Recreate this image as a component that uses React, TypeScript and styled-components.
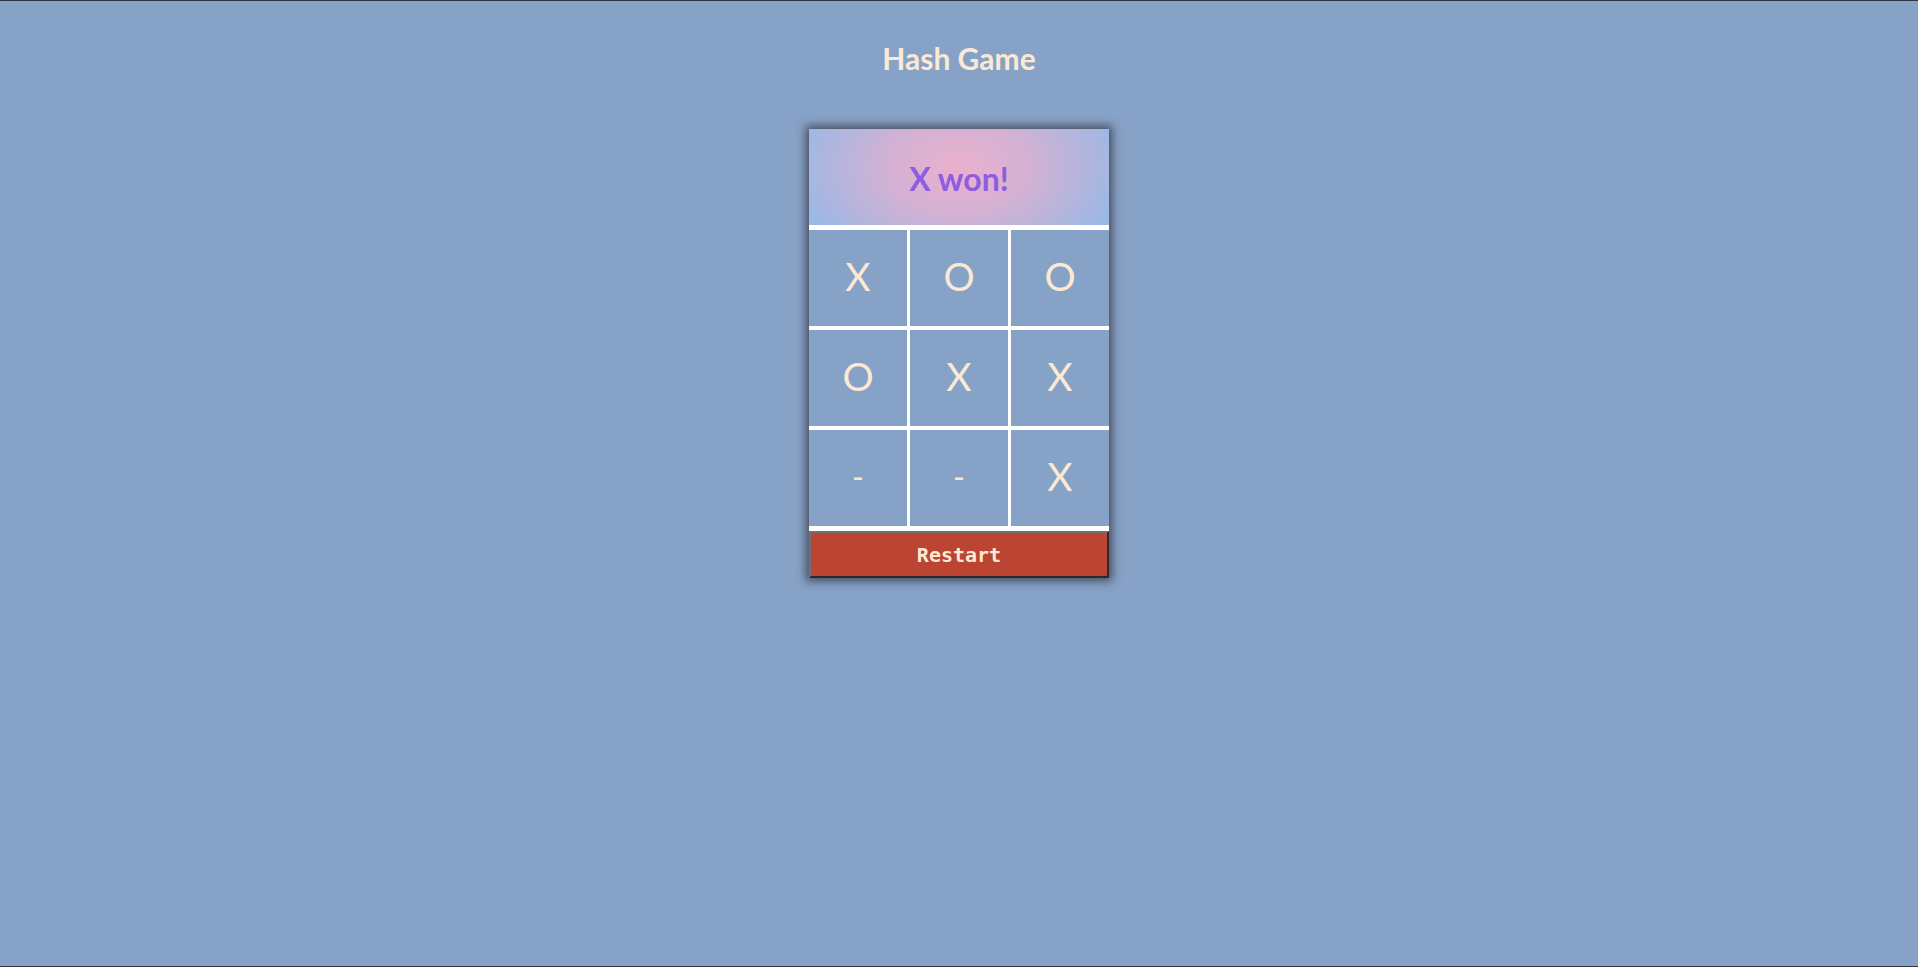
import React from "react";
import styled, { createGlobalStyle } from "styled-components";

const GlobalStyle = createGlobalStyle`
  html, body {
    margin: 0;
    padding: 0;
    background: #87a2c7;
  }
  * { box-sizing: border-box; }
`;

const Page = styled.div`
  min-height: 967px;
  height: 967px;
  border-top: 1px solid #34343e;
  border-bottom: 1px solid #34343e;
  background: #87a2c7;
  display: flex;
  flex-direction: column;
  align-items: center;
  font-family: Lato, "Noto Sans", sans-serif;
`;

const Title = styled.h1`
  margin: 39px 0 0;
  height: 36px;
  line-height: 36px;
  font-size: 30px;
  font-weight: 700;
  color: #fbe9d3;
`;

const Card = styled.div`
  margin-top: 53px;
  width: 300px;
  background: #ffffff;
  display: flex;
  flex-direction: column;
  gap: 5px;
  box-shadow: 0 0 9px 3px rgba(50, 52, 62, 0.8);
`;

const Status = styled.div`
  height: 96px;
  display: flex;
  align-items: center;
  justify-content: center;
  background: radial-gradient(ellipse 58% 120% at 50% 40%, #ebb0cd 0%, #d4b1d3 40%, #96b9e7 100%);
  font-size: 32px;
  font-weight: 700;
  color: #8f5ce0;
  padding-top: 3px;
`;

const Board = styled.div`
  display: grid;
  grid-template-columns: repeat(3, 1fr);
  grid-template-rows: repeat(3, 96px);
  column-gap: 3px;
  row-gap: 4px;
`;

const Cell = styled.button<{ $empty?: boolean }>`
  border: none;
  margin: 0;
  padding: 0 0 4px;
  background: #87a2c7;
  color: #fbe9d3;
  font-family: Lato, "Noto Sans", sans-serif;
  font-size: ${(p) => (p.$empty ? "32px" : "39px")};
  font-weight: 400;
  display: flex;
  align-items: center;
  justify-content: center;
  cursor: pointer;
`;

const RestartButton = styled.button`
  height: 47px;
  margin: 0;
  border-style: solid;
  border-width: 2px;
  border-color: #707075 #2a2a2e #2a2a2e #707075;
  background: #bb4432;
  color: #fbe9d3;
  font-family: "DejaVu Sans Mono", "Liberation Mono", monospace;
  font-weight: 700;
  font-size: 20px;
  cursor: pointer;
`;

const board = ["X", "O", "O", "O", "X", "X", "-", "-", "X"];

export default function App() {
  return (
    <>
      <GlobalStyle />
      <Page>
        <Title>Hash Game</Title>
        <Card>
          <Status>X won!</Status>
          <Board>
            {board.map((v, i) => (
              <Cell key={i} $empty={v === "-"}>
                {v}
              </Cell>
            ))}
          </Board>
          <RestartButton>Restart</RestartButton>
        </Card>
      </Page>
    </>
  );
}
